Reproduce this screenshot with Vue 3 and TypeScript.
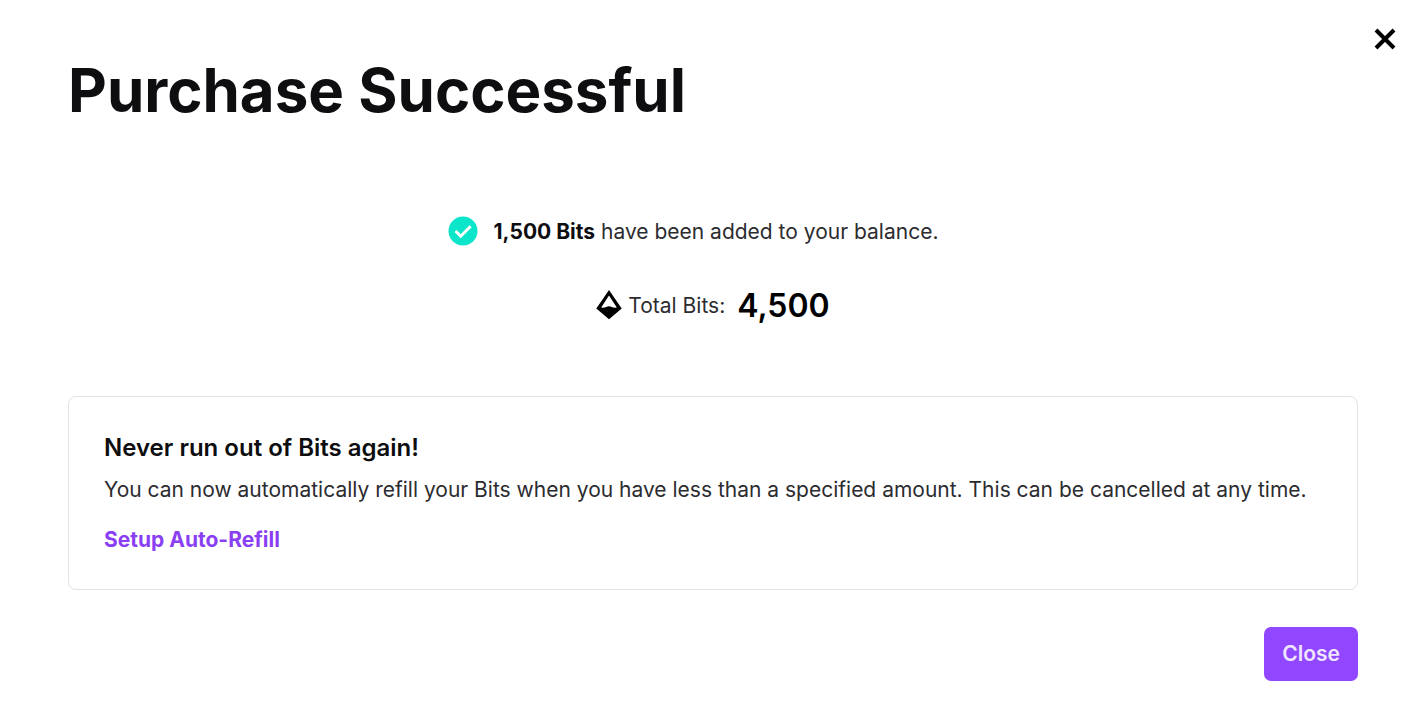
<script setup lang="ts">
const added = '1,500 Bits'
const total = '4,500'
</script>

<template>
  <main class="dialog">
    <button class="dismiss" type="button" aria-label="Dismiss">
      <svg viewBox="0 0 24 24" width="24" height="24" aria-hidden="true">
        <path d="M3 3 21 21M21 3 3 21" fill="none" stroke="#000" stroke-width="4" />
      </svg>
    </button>
    <h1>Purchase Successful</h1>
    <section class="summary">
      <p class="added">
        <svg viewBox="0 0 30 30" width="30" height="30" aria-hidden="true">
          <circle cx="15" cy="14" r="14.5" fill="#0be5ca" />
          <path d="m7.5 14 5.2 5.2 10-10" fill="none" stroke="#fff" stroke-width="3" />
        </svg>
        <span><strong>{{ added }}</strong> have been added to your balance.</span>
      </p>
      <p class="total">
        <svg viewBox="0 0 26 32" width="26" height="32" aria-hidden="true">
          <path
            fill="#000"
            fill-rule="evenodd"
            d="M13 0 25.7 18.6 13 29.2.3 18.6ZM13 5.4 5.2 17.6Q8.2 18 10.2 16.9 13 15.7 15.8 16.9 17.8 18 20.8 17.6Z"
          />
        </svg>
        <span>Total Bits:</span>
        <strong>{{ total }}</strong>
      </p>
    </section>
    <section class="card">
      <h2>Never run out of Bits again!</h2>
      <p>You can now automatically refill your Bits when you have less than a specified amount. This can be cancelled at any time.</p>
      <a href="#auto-refill">Setup Auto-Refill</a>
    </section>
    <footer>
      <button class="close" type="button">Close</button>
    </footer>
  </main>
</template>

<style>
body {
  background: #fff;
}
</style>

<style scoped>
.dialog {
  position: relative;
  padding: 52px 66px 40px 68px;
  font-family: Inter, "Liberation Sans", sans-serif;
  font-size: 21px;
  line-height: 32px;
  color: #2c2c30;
}

h1,
h2,
p {
  margin: 0;
}

.dismiss {
  position: absolute;
  top: 27px;
  right: 27px;
  padding: 0;
  border: 0;
  background: none;
  cursor: pointer;
}

svg {
  display: block;
  flex: none;
  overflow: visible;
}

h1 {
  font-size: 60px;
  line-height: 76px;
  font-weight: 700;
  color: #0e0e10;
}

.summary {
  display: flex;
  flex-direction: column;
  align-items: center;
  gap: 42px;
  padding: 88px 0 74px;
}

.added,
.total {
  display: flex;
  align-items: center;
}

.added {
  gap: 16px;
  margin-right: 40px;
}

.added strong {
  font-weight: 700;
  color: #0e0e10;
}

.total {
  gap: 6px;
}

.total strong {
  margin-left: 6px;
  font-size: 32px;
  font-weight: 600;
  color: #000;
}

.card {
  padding: 35px 35px 33px;
  border: 1px solid #e2e2e4;
  border-radius: 8px;
}

h2 {
  font-size: 24px;
  line-height: 32px;
  font-weight: 600;
  color: #0e0e10;
}

.card p {
  margin: 10px 0 18px;
}

.card a {
  font-weight: 700;
  color: #8a3ff2;
  text-decoration: none;
}

footer {
  display: flex;
  justify-content: flex-end;
  margin-top: 37px;
}

.close {
  padding: 11px 18px;
  border: 0;
  border-radius: 7px;
  background: #9147ff;
  color: #efe5ff;
  font: inherit;
  font-weight: 600;
  cursor: pointer;
}
</style>
